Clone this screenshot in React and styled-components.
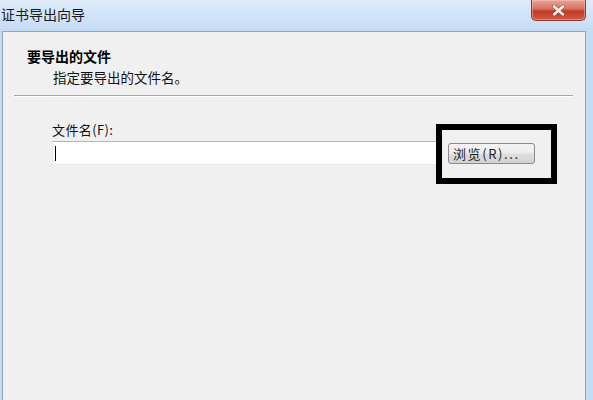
import styled, { createGlobalStyle } from 'styled-components';

const GlobalStyle = createGlobalStyle`
  html, body {
    margin: 0;
    padding: 0;
    background: #f0f0f0;
  }
  body {
    font-family: "Noto Sans CJK SC", "Liberation Sans", sans-serif;
  }
`;

const Window = styled.div`
  width: 593px;
  height: 400px;
  display: flex;
  flex-direction: column;
  overflow: hidden;
  background: #c4dbf4;
`;

const TitleBar = styled.div`
  height: 31px;
  flex: none;
  display: flex;
  align-items: flex-start;
  justify-content: space-between;
  background: linear-gradient(to bottom, #dfeaf8 0%, #d3e4f7 45%, #c5dbf4 100%);
`;

const Title = styled.div`
  padding-top: 5px;
  padding-left: 1px;
  font-size: 14px;
  line-height: 18px;
  color: #1a1a1a;
`;

const CloseButton = styled.div`
  width: 53px;
  height: 20px;
  margin-right: 7px;
  border: 1px solid #8c3a30;
  border-top: none;
  border-radius: 0 0 5px 5px;
  background: linear-gradient(to bottom, #e7a89b 0%, #d7705e 45%, #c13a25 55%, #cf5a44 100%);
  display: flex;
  align-items: center;
  justify-content: center;
  box-shadow: inset 0 0 0 1px rgba(255, 200, 190, 0.45);
`;

const Frame = styled.div`
  flex: 1;
  display: flex;
  padding: 0 7px 0 2px;
`;

const Panel = styled.div`
  flex: 1;
  background: #f0f0f0;
  border: 1px solid #9aa4b0;
  border-bottom: none;
  display: flex;
  flex-direction: column;
`;

const Header = styled.div`
  padding: 15px 0 0 24px;
  height: 47px;
`;

const Heading = styled.div`
  font-size: 14px;
  line-height: 18px;
  font-weight: bold;
  color: #000;
`;

const SubHeading = styled.div`
  margin-top: 3px;
  padding-left: 26px;
  font-size: 13.5px;
  line-height: 18px;
  color: #111;
`;

const Separator = styled.div`
  margin: 1px 12px 0 11px;
  border-top: 1px solid #a8a8a8;
  border-bottom: 1px solid #ffffff;
`;

const Content = styled.div`
  padding: 25px 0 0 49px;
`;

const Label = styled.div`
  font-size: 13px;
  line-height: 16px;
  color: #111;
  margin-bottom: 3px;
  letter-spacing: 0.4px;
`;

const Row = styled.div`
  display: flex;
  align-items: center;
  gap: 11px;
`;

const TextBox = styled.div`
  width: 381px;
  height: 22px;
  background: #fff;
  border: 1px solid #e2e8ef;
  border-top-color: #a9b6c4;
  display: flex;
  align-items: center;
  padding-left: 2px;
`;

const Caret = styled.span`
  width: 1px;
  height: 15px;
  background: #000;
`;

const ButtonWrap = styled.div`
  position: relative;
`;

const Button = styled.div`
  width: 81px;
  height: 19px;
  border: 1px solid #8a8a8a;
  border-radius: 3px;
  background: linear-gradient(to bottom, #f4f4f4 0%, #ececec 48%, #dedede 52%, #d2d2d2 100%);
  font-size: 13px;
  line-height: 19px;
  padding-left: 4px;
  box-sizing: content-box;
  color: #222;
  white-space: nowrap;
  letter-spacing: 1.6px;
`;

const Callout = styled.div`
  position: absolute;
  left: -12px;
  right: -22px;
  top: -19px;
  bottom: -20px;
  border: 6px solid #000;
  pointer-events: none;
`;

export default function App() {
  return (
    <>
      <GlobalStyle />
      <Window>
        <TitleBar>
          <Title>证书导出向导</Title>
          <CloseButton>
            <svg width="13" height="11" viewBox="0 0 13 11">
              <path d="M2 1.5 L11 9.5 M11 1.5 L2 9.5" stroke="#5a1a12" strokeWidth="3.6" strokeLinecap="round" opacity="0.5" />
              <path d="M2 1.5 L11 9.5 M11 1.5 L2 9.5" stroke="#ffffff" strokeWidth="2.4" strokeLinecap="round" />
            </svg>
          </CloseButton>
        </TitleBar>
        <Frame>
          <Panel>
            <Header>
              <Heading>要导出的文件</Heading>
              <SubHeading>指定要导出的文件名。</SubHeading>
            </Header>
            <Separator />
            <Content>
              <Label>文件名(F):</Label>
              <Row>
                <TextBox>
                  <Caret />
                </TextBox>
                <ButtonWrap>
                  <Button>浏览(R)...</Button>
                  <Callout />
                </ButtonWrap>
              </Row>
            </Content>
          </Panel>
        </Frame>
      </Window>
    </>
  );
}
